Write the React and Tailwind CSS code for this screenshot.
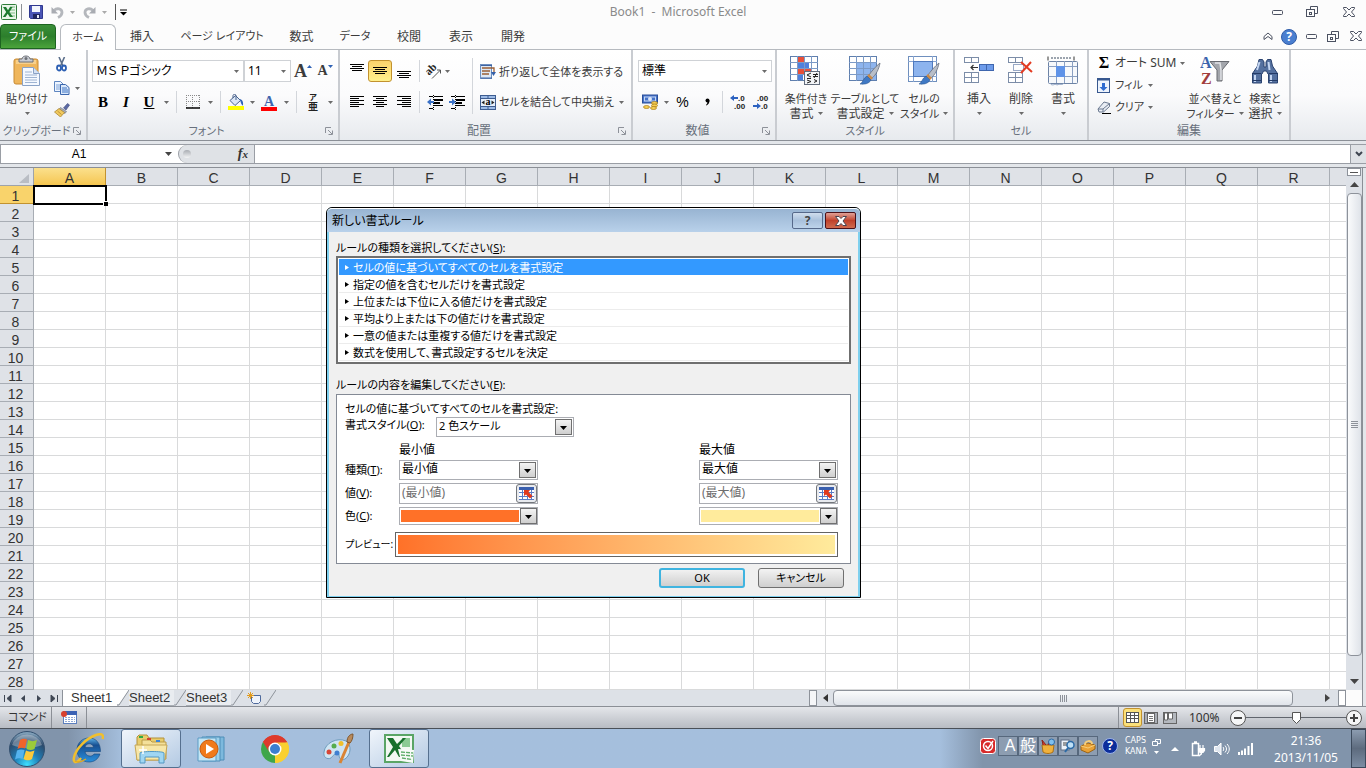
import React from "react";

/* ---------- small shared pieces ---------- */

const sizeOf = (t) => (/^[\u4e00-\u9fff]+$/.test(t) ? "text-xs" : "text-[11px]");

function Svg({ w = 16, h = 16, children, className = "" }) {
  return (
    <svg width={w} height={h} viewBox={`0 0 ${w} ${h}`} fill="none" className={"block shrink-0 " + className} aria-hidden="true">
      {children}
    </svg>
  );
}

function Caret({ className = "text-[#6b6b6b]" }) {
  return (
    <Svg w={5} h={3} className={className}>
      <path d="M0 0h5L2.5 3z" fill="currentColor" />
    </Svg>
  );
}

function Tool({ w, label, children, className = "" }) {
  return (
    <button type="button" aria-label={label} className={`flex h-[22px] shrink-0 items-center justify-center ${w} ${className}`}>
      {children}
    </button>
  );
}

function Sep({ w = "w-2" }) {
  return (
    <span className={`flex h-[22px] shrink-0 justify-center ${w}`}>
      <span className="h-full w-px bg-[#d3d6db]" />
    </span>
  );
}

function Combo({ label, value, w }) {
  return (
    <span className={`flex h-[22px] shrink-0 items-center border border-[#cfd2d6] bg-white pr-1 ${w}`}>
      <select aria-label={label} className="h-full min-w-0 flex-1 appearance-none bg-transparent pl-[3px] text-xs leading-4 text-black outline-none">
        <option>{value}</option>
      </select>
      <Caret />
    </span>
  );
}

function Group({ title, w, launcher, children }) {
  return (
    <section aria-label={title} className={`flex h-full shrink-0 flex-col border-r-2 border-r-[#c9ccd1] ${w}`}>
      <div className="flex min-h-0 flex-1">{children}</div>
      <div className="flex h-[18px] items-center text-[#68707c]">
        <span className={`flex-1 whitespace-nowrap text-center leading-4 ${sizeOf(title)}`}>{title}</span>
        {launcher && (
          <button type="button" aria-label={title + " オプション"} className="mr-[5px]">
            <Svg w={8} h={8}>
              <path d="M.5 6V.5H6M3 3l4 4M7.5 3.5v4h-4" stroke="#8d9199" />
            </Svg>
          </button>
        )}
      </div>
    </section>
  );
}

function Big({ w, icon, lines }) {
  return (
    <button type="button" className={`flex shrink-0 flex-col items-center pt-1 ${w}`}>
      <span className="mb-[3px] flex h-[34px] items-center justify-center">{icon}</span>
      <span className={`whitespace-nowrap leading-[15px] ${sizeOf(lines[0])}`}>{lines[0]}</span>
      <span className={`flex h-[15px] items-center gap-1 whitespace-nowrap leading-[15px] ${sizeOf(lines[1])}`}>
        {lines[1]}
        <Caret />
      </span>
    </button>
  );
}

/* ---------- icons ---------- */

const ExcelSmall = () => (
  <Svg w={16} h={16}>
    <rect x=".5" y=".5" width="15" height="15" rx="1" fill="#e9f5e9" stroke="#2f7d3a" />
    <path d="M9 3h5M9 6h5M9 9h5M9 12h5" stroke="#7dbb84" />
    <path d="M2 3h3l2 3.3L9 3h2.6L8.4 8l3.6 5H8.8L6.7 9.8 4.5 13H1.8L5.2 8z" fill="#1d7a2f" />
  </Svg>
);

const Floppy = () => (
  <Svg w={14} h={14}>
    <path d="M.5.5h13v13h-12l-1-1z" fill="#4a55b5" stroke="#30388f" />
    <rect x="3" y="1" width="8" height="6" fill="#f2f5fc" />
    <rect x="4" y="9" width="7" height="5" fill="#20265f" />
    <rect x="8" y="10" width="2" height="3" fill="#e6e9f5" />
  </Svg>
);

const Undo = ({ flip }) => (
  <Svg w={13} h={13} className={flip ? "-scale-x-100" : ""}>
    <path d="M3 4.500C6 1.500 11 2.500 11 6.500c0 2.500-2 4-4 5" stroke="#b4b7bc" strokeWidth="2.800" />
    <path d="M.5 1v6.500H7z" fill="#a9acb2" />
  </Svg>
);

const Paste = () => (
  <Svg w={28} h={32}>
    <rect x="1" y="4" width="24" height="25" rx="2" fill="#efb65c" stroke="#c88a33" />
    <rect x="3" y="5" width="20" height="4" fill="#f7d08c" />
    <path d="M6 7V4h3c0-4 8-4 8 0h3v3z" fill="#c9ccd2" stroke="#6d7178" />
    <circle cx="13" cy="3.500" r="1.500" fill="#6d7178" />
    <path d="M9.500 12.500h11l6 6v12h-17z" fill="#f5f9ff" stroke="#8aa2c6" />
    <path d="M20.500 12.500v6h6" fill="#d5e2f4" stroke="#8aa2c6" />
    <path d="M12 17h7M12 20h12M12 22.500h12M12 25h12M12 27.500h12" stroke="#9fb4d2" />
  </Svg>
);

const Scissors = () => (
  <Svg w={11} h={15}>
    <path d="M3 0l4 9M8.500 0L4.500 9" stroke="#5c6f8b" strokeWidth="1.600" />
    <ellipse cx="3" cy="11" rx="2" ry="2.500" stroke="#2c5fb3" strokeWidth="1.800" />
    <ellipse cx="8" cy="11" rx="2" ry="2.500" stroke="#2c5fb3" strokeWidth="1.800" />
  </Svg>
);

const Copy = () => (
  <Svg w={16} h={14}>
    <path d="M.5.5h6l3 3v7h-9z" fill="#eef5ff" stroke="#5f86c0" />
    <path d="M2 4h5M2 6h6M2 8h6" stroke="#7ea3d8" />
    <path d="M6.500 3.500h5l3.500 3v7H6.500z" fill="#dbe9fb" stroke="#3b66ad" />
    <path d="M8 7h5M8 9h6M8 11h6" stroke="#3f74c4" />
  </Svg>
);

const Brush = () => (
  <Svg w={16} h={14}>
    <path d="M9.500 5l4-4.500 2 1.500-3.500 5z" fill="#5b6aa5" stroke="#3d4677" strokeWidth=".6" />
    <path d="M6.500 4.500l6 4-1.500 2-6-4z" fill="#a9adb8" stroke="#6a6e7c" strokeWidth=".6" />
    <path d="M5 5.500l5.500 4L6.500 14 .5 9z" fill="#f0c95f" stroke="#a27b25" strokeWidth=".7" />
    <path d="M3.500 8l4 3.500" stroke="#c39634" />
  </Svg>
);

const BorderIcon = () => (
  <Svg w={14} h={14}>
    <path d="M0 .5h14M0 6.500h14M.5 0v13M6.500 0v13M13.500 0v13" stroke="#8b8b8b" strokeDasharray="1 1" />
    <path d="M0 13h14" stroke="#000" strokeWidth="1.500" />
  </Svg>
);

const Bucket = () => (
  <Svg w={16} h={16}>
    <path d="M2 6.500L7.500 1.500l5 5-5.500 5z" fill="#dbe6f6" stroke="#49628c" />
    <path d="M5 4V1.500c0-1.500 3-1.500 3 0V6" stroke="#49628c" />
    <path d="M11.500 5c3 .5 4 3 3.500 6.500-1 0-2-2-2.500-4z" fill="#2f63b8" />
    <rect y="12" width="16" height="4" fill="#ff0" />
  </Svg>
);

const FontColor = () => (
  <Svg w={16} h={18}>
    <text x="8" y="13" textAnchor="middle" fontFamily="Liberation Serif, serif" fontWeight="700" fontSize="14" fill="#3f66ae">A</text>
    <rect y="14" width="16" height="4" fill="#f00" />
  </Svg>
);

const Furigana = () => (
  <Svg w={12} h={20}>
    <text x="6" y="8" textAnchor="middle" fontFamily="Noto Sans CJK JP, sans-serif" fontSize="8" fontWeight="700" fill="#222">ア</text>
    <text x="6" y="18" textAnchor="middle" fontFamily="Noto Sans CJK JP, sans-serif" fontSize="10" fontWeight="700" fill="#222">亜</text>
  </Svg>
);

const Lines = ({ kind }) => {
  const sets = {
    left: "M0 .5h14M0 2.500h9M0 4.500h14M0 6.500h9M0 8.500h14M0 10.500h9",
    center: "M0 .5h14M3 2.500h8M0 4.500h14M3 6.500h8M0 8.500h14M3 10.500h8",
    right: "M0 .5h14M5 2.500h9M0 4.500h14M5 6.500h9M0 8.500h14M5 10.500h9",
    v: "M0 .5h14M2 2.500h10M0 4.500h14M2 6.500h10",
  };
  return (
    <Svg w={14} h={kind === "v" ? 8 : 12}>
      <path d={sets[kind]} stroke="#000" />
    </Svg>
  );
};

const Orient = () => (
  <Svg w={20} h={20}>
    <text x="4" y="14" transform="rotate(-45 6 12)" fontFamily="Liberation Serif, serif" fontWeight="700" fontSize="11" fill="#222">ab</text>
    <path d="M9 17.500L17.500 9M14 9h3.500v3.500" stroke="#555" />
  </Svg>
);

const Indent = ({ out }) => (
  <Svg w={16} h={15}>
    <path d="M2 1.500h4M7 1.500h9M7 4.500h9M7 7.500h6M7 10.500h9M2 13.500h4" stroke="#000" />
    <path d="M7 5h9M7 8h6" stroke="#000" strokeWidth="2" />
    <path d="M6.500 0v15" stroke="#000" strokeDasharray="1 1" />
    {out ? <path d="M0 7l4-3.500V6h3v2H4v2.500z" fill="#3b72c8" /> : <path d="M7 7L3 3.500V6H0v2h3v2.500z" fill="#3b72c8" />}
  </Svg>
);

const Wrap = () => (
  <Svg w={16} h={16}>
    <rect x=".5" y=".5" width="11" height="14" fill="#dde8f5" stroke="#6c8fc0" />
    <path d="M1 1.500h11M1 14h11" stroke="#3f62a0" />
    <path d="M2 4h12v5M2 7h8M2 10h7" stroke="#9b5f35" strokeWidth="1.300" />
    <path d="M11 8h5l-2.500 4z" fill="#3560a8" />
  </Svg>
);

const Merge = () => (
  <Svg w={16} h={15}>
    <rect x=".5" y=".5" width="15" height="14" fill="#9dbbe6" stroke="#3d5c90" />
    <path d="M0 3.500h16M0 11.500h16M8 0v4M8 11v4" stroke="#3d5c90" />
    <rect x="1" y="4" width="14" height="7" fill="#e8f0fb" />
    <text x="8" y="10" textAnchor="middle" fontFamily="Liberation Serif, serif" fontWeight="700" fontSize="10" fill="#000">a</text>
    <path d="M4.500 5.500v4L1.500 7.500zM11.500 5.500v4l3-2z" fill="#222" />
  </Svg>
);

const Money = () => (
  <Svg w={17} h={16}>
    <rect x=".5" y="1" width="15" height="8" fill="#4673c8" stroke="#2a4f99" />
    <rect x="2.500" y="3" width="11" height="4" stroke="#c6d8f5" />
    <circle cx="8" cy="5" r="2" fill="#dce8fb" />
    <ellipse cx="12.500" cy="9" rx="3" ry="1.500" fill="#f6ce53" stroke="#a87a14" strokeWidth=".7" />
    <ellipse cx="12.500" cy="11.500" rx="3" ry="1.500" fill="#f6ce53" stroke="#a87a14" strokeWidth=".7" />
    <ellipse cx="11.500" cy="14" rx="3" ry="1.500" fill="#f6ce53" stroke="#a87a14" strokeWidth=".7" />
    <ellipse cx="4.500" cy="13" rx="3" ry="1.500" fill="#f6ce53" stroke="#a87a14" strokeWidth=".7" />
  </Svg>
);

const Decimal = ({ more }) => (
  <Svg w={17} h={16}>
    <g fontFamily="Liberation Sans, sans-serif" fontWeight="700" fontSize="8" fill="#222">
      <text x={more ? 8 : 4} y="7">{more ? ".0" : ".00"}</text>
      <text x={more ? 4 : 8} y="15">{more ? ".00" : ".0"}</text>
    </g>
    {more ? <path d="M0 4l4-3v2h4v2H4v2z" fill="#2c62c0" /> : <path d="M8 12L4 9v2H0v2h4v2z" fill="#2c62c0" />}
  </Svg>
);

const GridBase = ({ fill }) => (
  <>
    <rect x=".5" y=".5" width="27" height="24" fill="#fff" stroke="#5f7fae" />
    {fill}
    <path d="M7.500 0v25M14.500 0v25M21.500 0v25M0 6.500h28M0 12.500h28M0 18.500h28" stroke="#7c9ac6" />
  </>
);

const CondFormat = () => (
  <Svg w={32} h={30}>
    <GridBase fill={<><path d="M7 1h7v6H7z" fill="#e8503a" /><path d="M7 7h12v6H7z" fill="#4f80dc" /><path d="M7 13h15v6H7z" fill="#e8503a" /><path d="M7 19h6v5H7z" fill="#4f80dc" /></>} />
    <rect x="14.500" y="15.500" width="15" height="13" fill="#f3f5f8" stroke="#636d7d" />
    <path d="M21 17l-4 2 4 2M17 22.500h4M23 18.500h5M23 20.500h5M27 17l-3 5M17 24l4 1.500-4 1.500M24 23.500l3 1.500-3 1.500" stroke="#222" />
  </Svg>
);

const PaintBrush = () => (
  <>
    <path d="M31 7c-4 3-9 9-11 12l3 3c4-3 7-9 8-15z" fill="#b8bec8" stroke="#68707e" strokeWidth=".8" />
    <path d="M20 18l4 4-2 2-4-4z" fill="#c98a4a" />
    <path d="M18 20l4 4c-2 4-7 4.500-11 4 3-1 3-6 7-8z" fill="#3f78c4" stroke="#2b5791" strokeWidth=".6" />
  </>
);

const TableFormat = () => (
  <Svg w={32} h={30}>
    <GridBase fill={<path d="M7 6h20v18H7z" fill="#8db4ee" />} />
    <PaintBrush />
  </Svg>
);

const CellStyle = () => (
  <Svg w={32} h={30}>
    <rect x=".5" y=".5" width="28" height="25" fill="#fff" stroke="#6f8fbe" />
    <path d="M5.500 0v26M24.500 0v26M0 5.500h29M0 20.500h29" stroke="#8aa7d2" />
    <rect x="5.500" y="5.500" width="19" height="15" fill="#8db4ee" stroke="#4f79bd" />
    <PaintBrush />
  </Svg>
);

const CellBox = ({ x, y, rows }) => (
  <>
    <rect x={x + 0.5} y={y + 0.5} width="14" height={rows * 5} fill="#fff" stroke="#7c8da8" />
    <path d={`M${x + 7.5} ${y}v${rows * 5 + 1}`} stroke="#7c8da8" />
    {rows > 1 && <path d={`M${x} ${y + 5.5}h15`} stroke="#7c8da8" />}
  </>
);

const InsertCells = () => (
  <Svg w={31} h={28}>
    <CellBox x={0} y={0} rows={1} />
    <CellBox x={0} y={15} rows={2} />
    <rect x="15.500" y="7.500" width="14" height="6" fill="#6d9bea" stroke="#3f66ae" />
    <path d="M22.500 8v6" stroke="#3f66ae" />
    <path d="M14 10.500H7M9.500 8L7 10.500 9.500 13" stroke="#333" strokeWidth="1.200" />
  </Svg>
);

const DeleteCells = () => (
  <Svg w={26} h={28}>
    <CellBox x={0} y={0} rows={1} />
    <CellBox x={0} y={15} rows={2} />
    <rect x="5.500" y="7.500" width="10" height="6" stroke="#34548f" strokeDasharray="1 1" />
    <path d="M13 5l11 10M23 5L13 16" stroke="#e33b22" strokeWidth="2" />
  </Svg>
);

const FormatCells = () => (
  <Svg w={32} h={30}>
    <path d="M1 .5v4M27 .5v4" stroke="#333" />
    <path d="M4 2h20" stroke="#3a4a5e" strokeDasharray="2 1" />
    <rect x="1.500" y="5.500" width="29" height="22" rx="1" fill="#f7f9fc" stroke="#6d83a5" />
    <path d="M9.500 5v22M17.500 5v22M25.500 5v22M1 10.500h29M1 20.500h29" stroke="#8ba0c2" />
    <rect x="9" y="10" width="9" height="11" fill="#5f93e8" />
    <path d="M3 27c2 4 5 0 7 2 3-2 5 1 7-2" stroke="#8ba0c2" />
  </Svg>
);

const FillDown = () => (
  <Svg w={13} h={15}>
    <rect x=".5" y=".5" width="12" height="14" fill="#eef4fd" stroke="#38588f" />
    <path d="M0 1.500h13" stroke="#38588f" strokeWidth="2" />
    <path d="M5 5h3v4h2.500l-4 4-4-4H5z" fill="#2f6bd0" />
  </Svg>
);

const Eraser = () => (
  <Svg w={14} h={13}>
    <path d="M1 8l6-7 5.500 1.500v3L6.500 11H2z" fill="#e9edf4" stroke="#6b7990" />
    <path d="M1 8h5l6.500-5.500M6 8v3" stroke="#6b7990" />
    <path d="M5 12.500h9" stroke="#000" />
  </Svg>
);

const SortFilter = () => (
  <Svg w={30} h={32}>
    <path d="M10 6.500h19l-7 8.500v11h-5V15z" fill="#a3a6ac" stroke="#686b71" />
    <path d="M15 8h5l1 7v10" stroke="#e2e4e7" strokeWidth="1.500" />
    <text x="0" y="13" fontFamily="Liberation Serif, serif" fontWeight="700" fontSize="16" fill="#3b64ad">A</text>
    <text x="1" y="29" fontFamily="Liberation Serif, serif" fontWeight="700" fontSize="16" fill="#a13c3c">Z</text>
  </Svg>
);

const Binoculars = () => (
  <Svg w={28} h={26}>
    <path d="M8 1.500h3.500L13 4v5h2V4l1.500-2.500H20L21.500 8l5 7.500V25h-9v-9H17l-1.500-3h-3L11 16h-.500v9h-9v-9.500L6.500 8z" fill="#54709f" stroke="#2b4370" />
    <path d="M8.500 4L6 12M4 17v7M17.500 4l1 8M20 17v7" stroke="#c3d5f2" strokeWidth="2" />
    <path d="M1 15.500h9M18 15.500h9M1 22.500h9M18 22.500h9" stroke="#233a66" />
  </Svg>
);

const MinIcon = () => (
  <Svg w={12} h={5}><rect x=".5" y=".5" width="10" height="4" rx="1" stroke="#4b5161" /></Svg>
);
const RestoreIcon = () => (
  <Svg w={13} h={12}>
    <path d="M4.500 3V.5h7v7H9" stroke="#4b5161" />
    <rect x=".5" y="3.500" width="8" height="7" stroke="#4b5161" />
    <rect x="3.500" y="6.500" width="2" height="2" stroke="#4b5161" />
  </Svg>
);
const CloseIcon = () => (
  <Svg w={12} h={11}>
    <path d="M.5.5h3L6 3l2.500-2.500h3v1L8.500 5l3 3.500v1h-3L6 7 3.500 9.500h-3v-1L3.500 5l-3-3.500z" stroke="#4b5161" />
  </Svg>
);

/* ---------- window header ---------- */

function TitleBar() {
  return (
    <header className="flex h-6 shrink-0 items-center pl-px">
      <div className="flex flex-1 items-center">
        <ExcelSmall />
        <span className="ml-1 h-4 w-px bg-[#8d9096]" />
        <button type="button" aria-label="上書き保存" className="ml-[7px]"><Floppy /></button>
        <button type="button" aria-label="元に戻す" className="ml-2 flex items-center gap-1.5"><Undo /><Caret className="text-[#aaa]" /></button>
        <button type="button" aria-label="やり直し" className="ml-2 flex items-center gap-1.5"><Undo flip /><Caret className="text-[#aaa]" /></button>
        <span className="ml-2 h-4 w-px bg-[#555]" />
        <button type="button" aria-label="クイック アクセス" className="ml-1">
          <Svg w={7} h={7}><path d="M0 1h7" stroke="#000" /><path d="M0 3h7L3.500 6.500z" fill="#000" /></Svg>
        </button>
      </div>
      <h1 className="text-xs text-[#8a8a8a]">Book1&nbsp; -&nbsp; Microsoft Excel</h1>
      <div className="flex flex-1 items-center justify-end pr-[11px]">
        <button type="button" aria-label="最小化" className="mr-[22px]"><MinIcon /></button>
        <button type="button" aria-label="元のサイズに戻す" className="mr-6"><RestoreIcon /></button>
        <button type="button" aria-label="閉じる"><CloseIcon /></button>
      </div>
    </header>
  );
}

const TABS = [
  ["挿入", "w-[52px]"],
  ["ページ レイアウト", "w-[108px]"],
  ["数式", "w-[51px]"],
  ["データ", "w-[56px]"],
  ["校閲", "w-[52px]"],
  ["表示", "w-[52px]"],
  ["開発", "w-[52px]"],
];

function RibbonTabs() {
  return (
    <nav aria-label="リボン" className="flex h-[26px] shrink-0 border-b border-[#b6babf]">
      <button type="button" className="mr-1 w-14 rounded-t border border-[#1d6420] bg-linear-to-b from-[#3a8f38] via-[#2c7f2c] to-[#4ba43b] text-white">ファイル</button>
      <button type="button" className="-mb-px w-14 rounded-t-md border border-b-0 border-[#b6babf] bg-white">ホーム</button>
      {TABS.map(([t, w]) => (
        <button key={t} type="button" className={`whitespace-nowrap ${w} ${sizeOf(t)}`}>{t}</button>
      ))}
      <div className="ml-auto flex items-center pr-1">
        <button type="button" aria-label="リボンの最小化" className="mr-2">
          <Svg w={10} h={9}><path d="M1 4.500l4-3.500 4 3.500v3L5 4.500 1 7.500z" stroke="#4b5161" /></Svg>
        </button>
        <button type="button" aria-label="ヘルプ" className="mr-[9px] flex size-4 items-center justify-center rounded-full border border-[#2f5ca8] bg-[#4a7fd0] text-xs font-bold leading-3 text-white">?</button>
        <button type="button" aria-label="ブックの最小化" className="mr-[9px]"><MinIcon /></button>
        <button type="button" aria-label="ブックを元に戻す" className="mr-2.5"><RestoreIcon /></button>
        <button type="button" aria-label="ブックを閉じる"><CloseIcon /></button>
      </div>
    </nav>
  );
}

/* ---------- ribbon ---------- */

function Ribbon() {
  return (
    <div className="flex h-[91px] shrink-0 overflow-hidden border-b border-[#8b8f96] bg-linear-to-b from-white via-[#fbfbfc] to-[#e7eaee]">
      <Group title="クリップボード" w="w-[88px]" launcher>
        <Big w="w-[54px]" icon={<Paste />} lines={["貼り付け", ""]} />
        <div className="flex flex-col pt-[3px]">
          <Tool w="w-[15px]" label="切り取り"><Scissors /></Tool>
          <Tool w="w-[26px]" label="コピー" className="mt-0.5 gap-[5px]"><Copy /><Caret /></Tool>
          <Tool w="w-4" label="書式のコピー"><Brush /></Tool>
        </div>
      </Group>

      <Group title="フォント" w="w-[252px]" launcher>
        <div className="flex flex-col gap-[9px] pl-1 pt-2.5">
          <div className="flex">
            <Combo label="フォント名" value="ＭＳ Ｐゴシック" w="w-[152px]" />
            <Combo label="フォント サイズ" value="11" w="w-[47px]" />
            <Tool w="w-6" label="フォント サイズの拡大">
              <span className="font-['Liberation_Serif',serif] text-lg font-bold leading-5">A</span>
              <Svg w={5} h={3} className="-mt-2.5"><path d="M0 3h5L2.500 0z" fill="#2f62b5" /></Svg>
            </Tool>
            <Tool w="w-5" label="フォント サイズの縮小">
              <span className="font-['Liberation_Serif',serif] text-sm font-bold leading-4">A</span>
              <Svg w={5} h={3} className="-mt-2.5"><path d="M0 0h5L2.500 3z" fill="#2f62b5" /></Svg>
            </Tool>
          </div>
          <div className="flex font-['Liberation_Serif',serif] text-[15px] font-bold text-black">
            <Tool w="w-[22px]" label="太字">B</Tool>
            <Tool w="w-6" label="斜体" className="italic">I</Tool>
            <Tool w="w-[22px]" label="下線" className="underline">U</Tool>
            <Tool w="w-3" label="下線の種類"><Caret /></Tool>
            <Sep w="w-[9px]" />
            <Tool w="w-6" label="罫線"><BorderIcon /></Tool>
            <Tool w="w-2.5" label="罫線の種類"><Caret /></Tool>
            <Sep w="w-2.5" />
            <Tool w="w-[22px]" label="塗りつぶしの色"><Bucket /></Tool>
            <Tool w="w-2.5" label="塗りつぶしの色の選択"><Caret /></Tool>
            <Tool w="w-6" label="フォントの色"><FontColor /></Tool>
            <Tool w="w-2.5" label="フォントの色の選択"><Caret /></Tool>
            <Sep w="w-2.5" />
            <Tool w="w-6" label="ふりがなの表示"><Furigana /></Tool>
            <Tool w="w-2.5" label="ふりがなの設定"><Caret /></Tool>
          </div>
        </div>
      </Group>

      <Group title="配置" w="w-[293px]" launcher>
        <div className="flex flex-col gap-[9px] pl-[5px] pt-2.5">
          <div className="flex">
            <Tool w="w-[23px]" label="上揃え" className="pb-1.5"><Lines kind="v" /></Tool>
            <Tool w="w-6" label="上下中央揃え" className="rounded-[3px] border border-[#c2922f] bg-linear-to-b from-[#fbd36c] to-[#fff08c]"><Lines kind="v" /></Tool>
            <Tool w="w-[23px]" label="下揃え" className="pt-2"><Lines kind="v" /></Tool>
            <Sep />
            <Tool w="w-5" label="方向"><Orient /></Tool>
            <Tool w="w-2" label="方向の選択"><Caret /></Tool>
          </div>
          <div className="flex">
            <Tool w="w-[23px]" label="左揃え"><Lines kind="left" /></Tool>
            <Tool w="w-6" label="中央揃え"><Lines kind="center" /></Tool>
            <Tool w="w-[23px]" label="右揃え"><Lines kind="right" /></Tool>
            <Sep />
            <Tool w="w-[23px]" label="インデントを減らす"><Indent out /></Tool>
            <Tool w="w-[22px]" label="インデントを増やす"><Indent /></Tool>
          </div>
        </div>
        <span className="ml-1 mr-[7px] mt-2 h-14 w-px bg-[#d3d6db]" />
        <div className="flex flex-col gap-2 pt-[11px]">
          <button type="button" className="flex h-[22px] items-center gap-[3px] whitespace-nowrap"><Wrap />折り返して全体を表示する</button>
          <button type="button" className="flex h-[22px] items-center gap-[3px] whitespace-nowrap"><Merge />セルを結合して中央揃え<Caret className="ml-0.5 text-[#6b6b6b]" /></button>
        </div>
      </Group>

      <Group title="数値" w="w-[144px]" launcher>
        <div className="flex flex-col gap-[9px] pl-[5px] pt-2.5">
          <Combo label="表示形式" value="標準" w="w-[134px]" />
          <div className="flex text-black">
            <Tool w="w-6" label="通貨表示形式"><Money /></Tool>
            <Tool w="w-2" label="通貨の選択"><Caret /></Tool>
            <Tool w="w-[25px]" label="パーセント スタイル" className="font-['Liberation_Sans',sans-serif] text-sm">%</Tool>
            <Tool w="w-6" label="桁区切りスタイル"><Svg w={5} h={8}><circle cx="2.500" cy="2.500" r="2" fill="#000" /><path d="M4.500 2.500c0 2-1 4-3 5L1 7c1-1 1.500-2 1.500-3z" fill="#000" /></Svg></Tool>
            <Sep w="w-[7px]" />
            <Tool w="w-[25px]" label="小数点以下の表示桁数を増やす"><Decimal more /></Tool>
            <Tool w="w-[21px]" label="小数点以下の表示桁数を減らす"><Decimal /></Tool>
          </div>
        </div>
      </Group>

      <Group title="スタイル" w="w-[178px]">
        <div className="flex pl-1">
          <Big w="w-[50px]" icon={<CondFormat />} lines={["条件付き", "書式"]} />
          <Big w="w-[68px]" icon={<TableFormat />} lines={["テーブルとして", "書式設定"]} />
          <Big w="w-[50px]" icon={<CellStyle />} lines={["セルの", "スタイル"]} />
        </div>
      </Group>

      <Group title="セル" w="w-[134px]">
        <div className="flex pl-[3px]">
          <Big w="w-[42px]" icon={<InsertCells />} lines={["挿入", ""]} />
          <Big w="w-[42px]" icon={<DeleteCells />} lines={["削除", ""]} />
          <Big w="w-[42px]" icon={<FormatCells />} lines={["書式", ""]} />
        </div>
      </Group>

      <Group title="編集" w="w-[202px]">
        <div className="flex w-[99px] flex-col pl-2 pt-0.5">
          <button type="button" className="flex h-[22px] items-center gap-1 whitespace-nowrap">
            <span className="w-3.5 font-['Liberation_Serif',serif] text-base font-bold leading-4 text-black">Σ</span><span className="text-xs">オート SUM</span><Caret />
          </button>
          <button type="button" className="flex h-[22px] items-center gap-[5px]"><FillDown />フィル<Caret /></button>
          <button type="button" className="flex h-[22px] items-center gap-1"><Eraser />クリア<Caret /></button>
        </div>
        <Big w="w-[54px]" icon={<SortFilter />} lines={["並べ替えと", "フィルター"]} />
        <Big w="w-[46px]" icon={<Binoculars />} lines={["検索と", "選択"]} />
      </Group>
    </div>
  );
}

/* ---------- formula bar ---------- */

function FormulaBar() {
  return (
    <div className="shrink-0 bg-[#e3e6ea] py-[3px] text-xs">
      <div className="flex h-5 border-y border-[#9a9ea5] bg-white">
        <div className="flex w-[178px] shrink-0 items-center border-l border-[#9a9ea5] pr-1.5">
          <input aria-label="名前ボックス" defaultValue="A1" className="min-w-0 flex-1 bg-transparent pr-2 text-center font-['Liberation_Sans',sans-serif] text-black outline-none" />
          <Svg w={7} h={4}><path d="M0 0h7L3.500 4z" fill="#444" /></Svg>
        </div>
        <div className="flex w-[77px] shrink-0 items-center justify-between rounded-l-full border-x border-[#9a9ea5] bg-[#dfe2e6] pl-1 pr-1.5">
          <span className="size-2 rounded-full bg-linear-to-b from-[#a9adb3] to-[#f4f5f6]" />
          <button type="button" aria-label="関数の挿入" className="font-['Liberation_Serif',serif] text-sm font-bold italic leading-4 text-[#333]">f<span className="text-[11px]">x</span></button>
        </div>
        <input aria-label="数式バー" className="min-w-0 flex-1 px-1 outline-none" />
        <button type="button" aria-label="数式バーの展開" className="flex w-4 shrink-0 items-center justify-center border-l border-[#9a9ea5] bg-[#dfe2e6]">
          <Svg w={8} h={6}><path d="M1 1l3 3 3-3" stroke="#3f4550" strokeWidth="2" /></Svg>
        </button>
      </div>
    </div>
  );
}

/* ---------- worksheet ---------- */

const COLS = "ABCDEFGHIJKLMNOPQR".split("");
const ROWS = Array.from({ length: 28 }, (_, i) => i + 1);

function Sheet() {
  return (
    <table className="w-full table-fixed border-separate border-spacing-0 bg-white font-['Liberation_Sans',sans-serif] text-sm leading-[14px] text-[#333]">
      <colgroup>
        <col className="w-[34px]" />
        {COLS.map((c) => <col key={c} className="w-[72px]" />)}
        <col />
      </colgroup>
      <thead>
        <tr className="h-[18px]">
          <th aria-label="すべて選択" className="border-b border-r border-[#9ea3aa] bg-[#dfe2e7] p-0">
            <Svg w={10} h={9} className="ml-auto mr-1 mt-1"><path d="M10 0v9H0z" fill="#b9bdc4" /></Svg>
          </th>
          {COLS.map((c) => (
            <th key={c} scope="col" className={"border-b border-r p-0 pt-[3px] font-normal " + (c === "A" ? "border-[#c2922f] bg-linear-to-b from-[#fbe08c] to-[#f5c64f]" : "border-[#a8adb4] bg-[#dfe2e7]")}>{c}</th>
          ))}
          <th className="border-b border-[#a8adb4] bg-[#dfe2e7] p-0" />
        </tr>
      </thead>
      <tbody>
        {ROWS.map((r) => (
          <tr key={r} className="h-[18px]">
            <th scope="row" className={"border-b border-r p-0 pr-0.5 pt-[3px] font-normal " + (r === 1 ? "border-[#c2922f] bg-[#f9d36b]" : "border-[#a8adb4] bg-[#dfe2e7]")}>{r}</th>
            {COLS.map((c) =>
              c === "A" && r === 1 ? (
                <td key={c} className="relative border-b border-r border-[#d9dadb] p-0 outline-2 outline-offset-[-1px] outline-black">
                  <span className="absolute -bottom-[3px] -right-[3px] size-[5px] border-l border-t border-white bg-black" />
                </td>
              ) : (
                <td key={c} className="border-b border-r border-[#d9dadb] p-0" />
              )
            )}
            <td className="border-b border-[#d9dadb] p-0" />
          </tr>
        ))}
      </tbody>
    </table>
  );
}

const Slash = ({ first }) => (
  <Svg w={12} h={16}>
    {first && <path d="M0 0h12L2 14H0z" fill="#fff" />}
    <path d="M12 0L2 15H0" stroke="#8d929a" />
  </Svg>
);

const TRI = {
  first: "M1.500 1v7M8 1v7L4 4.500z",
  prev: "M6 1v7L2 4.500z",
  next: "M3 1v7l4-3.500z",
  last: "M7.500 1v7M1 1v7l4-3.500z",
};

function SheetBar() {
  return (
    <div className="flex h-4 shrink-0 items-stretch bg-[#dde1e7] font-['Liberation_Sans',sans-serif] text-[13px] leading-4 text-[#333]">
      <div className="flex w-[62px] shrink-0 items-center justify-around">
        {[["first", "先頭"], ["prev", "前"], ["next", "次"], ["last", "末尾"]].map(([k, l]) => (
          <button key={k} type="button" aria-label={l + "のシート"}>
            <Svg w={9} h={9}><path d={TRI[k]} fill="#3f4754" stroke={k === "first" || k === "last" ? "#3f4754" : "none"} strokeWidth="1" /></Svg>
          </button>
        ))}
      </div>
      <button type="button" className="w-[55px] border-l border-[#8d929a] bg-white pl-2 text-left">Sheet1</button>
      <Slash first />
      <button type="button" className="w-[45px] border-b border-[#a8adb4] bg-[#e9ecf0] text-left">Sheet2</button>
      <Slash />
      <button type="button" className="w-[45px] border-b border-[#a8adb4] bg-[#e9ecf0] text-left">Sheet3</button>
      <Slash />
      <button type="button" aria-label="ワークシートの挿入" className="flex w-[21px] items-center justify-center">
        <Svg w={14} h={12}>
          <path d="M4.500 3.500h9v6l-2 2h-5l-2-2z" fill="#eef3fb" stroke="#4f6a9c" />
          <path d="M3.500 0v7M0 3.500h7M1 1l5 5M6 1L1 6" stroke="#e39b1c" />
        </Svg>
      </button>
      <Slash />
      <div className="flex-1" />
      <span className="w-2 border border-[#8d929a] bg-[#f5f6f8]" />
      <div className="flex w-[529px] min-w-0 items-center">
        <button type="button" aria-label="左へスクロール" className="flex w-4 shrink-0 justify-center"><Svg w={5} h={8}><path d="M5 0v8L0 4z" fill="#333" /></Svg></button>
        <div className="mr-8 flex h-full flex-1 items-center justify-center gap-px rounded-sm border border-[#8d929a] bg-linear-to-b from-[#fafbfc] to-[#e0e4ea]">
          {[0, 1, 2, 3].map((i) => <span key={i} className="h-[7px] w-px bg-[#8d929a]" />)}
        </div>
        <button type="button" aria-label="右へスクロール" className="mr-2 shrink-0"><Svg w={5} h={8}><path d="M0 0v8l5-4z" fill="#444" /></Svg></button>
        <span className="h-full w-2 shrink-0 border border-[#8d929a] bg-white" />
      </div>
    </div>
  );
}

function VScroll() {
  return (
    <div className="mb-4 flex w-4 shrink-0 flex-col items-center bg-[#dde1e7]">
      <span className="mx-px flex h-2 w-[14px] items-center justify-center border border-[#8d929a] bg-white"><span className="h-px w-2 bg-[#555]" /></span>
      <button type="button" aria-label="上へスクロール" className="flex h-[17px] items-center"><Svg w={9} h={5}><path d="M0 5h9L4.500 0z" fill="#444" /></Svg></button>
      <div className="flex w-[15px] flex-1 flex-col items-center justify-center gap-px rounded-sm border border-[#8d929a] bg-linear-to-r from-[#fafbfc] to-[#dfe3e9]">
        {[0, 1, 2, 3].map((i) => <span key={i} className="h-px w-[7px] bg-[#8d929a]" />)}
      </div>
      <button type="button" aria-label="下へスクロール" className="mt-[17px] flex h-[17px] items-center"><Svg w={9} h={5}><path d="M0 0h9L4.500 5z" fill="#444" /></Svg></button>
    </div>
  );
}

/* ---------- dialog ---------- */

const RULES = [
  "セルの値に基づいてすべてのセルを書式設定",
  "指定の値を含むセルだけを書式設定",
  "上位または下位に入る値だけを書式設定",
  "平均より上または下の値だけを書式設定",
  "一意の値または重複する値だけを書式設定",
  "数式を使用して、書式設定するセルを決定",
];

function DropGlyph() {
  return (
    <span className="pointer-events-none flex h-4 w-[17px] shrink-0 items-center justify-center border border-[#707070] bg-linear-to-b from-[#f4f4f4] to-[#cfcfcf] pt-0.5">
      <Svg w={7} h={4}><path d="M0 0h7L3.500 4z" fill="#000" /></Svg>
    </span>
  );
}

function DialogSelect({ id, label, value, w }) {
  return (
    <span className={`flex h-5 items-center border border-[#abadb3] bg-white pr-px ${w}`}>
      <select id={id} aria-label={label} className={`h-full min-w-0 flex-1 appearance-none bg-transparent pb-0.5 pl-0.5 leading-4 outline-none ${sizeOf(value)}`}>
        <option>{value}</option>
      </select>
      <DropGlyph />
    </span>
  );
}

function ValueField({ id, label, value }) {
  return (
    <span className="flex h-[21px] w-[139px] items-stretch border border-[#abadb3] bg-white">
      <input id={id} aria-label={label} readOnly value={value} className="min-w-0 flex-1 pb-0.5 pl-0.5 text-xs leading-4 text-[#6d6d6d] outline-none" />
      <button type="button" aria-label={label ? label + "の参照" : "最小値の参照"} className="flex w-[21px] items-center justify-center rounded-[3px] border border-[#74777c] bg-[#e8eaee]">
        <Svg w={15} h={13}>
          <rect width="15" height="13" fill="#fff" />
          <path d="M0 1.500h15" stroke="#3a5fae" strokeWidth="3" />
          <path d="M0 5.500h15M0 9.500h15M0 12.500h15M3.500 3v10M8.500 3v10M12.500 3v10" stroke="#5a7dc6" />
          <path d="M5 3h6L9.500 5l4 4-2.500 2.500-4-4L5 9z" fill="#e03a1e" />
        </Svg>
      </button>
    </span>
  );
}

function ColorField({ id, label, swatch }) {
  return (
    <button id={id} type="button" aria-label={label} aria-haspopup="listbox" className="flex h-[18px] w-[139px] items-center border border-[#abadb3] bg-white pl-px">
      <span className={`mr-px h-3 flex-1 ${swatch}`} />
      <DropGlyph />
    </button>
  );
}

function Key({ text, k }) {
  return <>{text}(<u>{k}</u>):</>;
}

function RuleDialog() {
  return (
    <div role="dialog" aria-labelledby="dlg-title" className="absolute left-[326px] top-[207px] w-[535px] rounded-t-md border border-black bg-[#7fd0ee] px-0.5 pb-px text-black">
      <div className="-mx-0.5 flex h-6 items-center rounded-t-[5px] border-t border-white bg-linear-to-b from-[#98b4d2] to-[#b9d1ea] pl-[5px] pr-1">
        <h2 id="dlg-title" className="flex-1 text-xs">新しい書式ルール</h2>
        <button type="button" aria-label="ヘルプ" className="mr-0.5 flex h-[17px] w-[31px] items-center justify-center rounded-xs border border-[#56698a] bg-linear-to-b from-[#cfdded] via-[#a9c1dc] to-[#bdd3ea] text-xs font-bold leading-3 text-[#444]">?</button>
        <button type="button" aria-label="閉じる" className="flex h-[17px] w-[31px] items-center justify-center rounded-xs border border-[#4b1018] bg-linear-to-b from-[#e0a097] via-[#c0412b] to-[#cf6a4e]">
          <Svg w={12} h={10}><path d="M.5.5h3.500L6 2.500l2-2h3.500L8 5l3.500 4.500H8l-2-2-2 2H.5L4 5z" fill="#fff" stroke="#4a4450" /></Svg>
        </button>
      </div>

      <div className="bg-[#f0f0f0] px-[7px] py-2">
        <p id="rule-type" className="h-4 leading-4"><Key text="ルールの種類を選択してください" k="S" /></p>
        <ul role="listbox" aria-labelledby="rule-type" className="border-2 border-[#6f6f6f] bg-white px-px py-px">
          {RULES.map((r, i) => (
            <li key={r} role="option" aria-selected={i === 0} className={"flex h-[17px] items-center gap-1 border-b pl-1.5 pt-px leading-[15px] " + (i === 0 ? "border-white bg-[#3399ff] text-white" : "border-[#ececec]")}>
              <Svg w={4} h={5}><path d="M0 0v5l4-2.500z" fill="currentColor" /></Svg>
              {r}
            </li>
          ))}
        </ul>

        <p className="mb-px mt-[13px] leading-4"><Key text="ルールの内容を編集してください" k="E" /></p>

        <div className="border border-[#848a95] bg-white pb-[6px] pl-2 pr-3 pt-[7px]">
          <p className="h-[15px] leading-[14px]">セルの値に基づいてすべてのセルを書式設定:</p>
          <div className="flex items-start">
            <label htmlFor="f-style" className="w-[91px] whitespace-nowrap leading-4"><Key text="書式スタイル" k="O" /></label>
            <DialogSelect id="f-style" value="2 色スケール" w="w-[138px]" />
          </div>

          <div className="mt-1.5 grid grid-cols-[54px_1fr_139px] items-center gap-y-[3px]">
            <span />
            <span className="text-xs leading-[14px]">最小値</span>
            <span className="text-xs leading-[14px]">最大値</span>

            <label htmlFor="f-type"><Key text="種類" k="T" /></label>
            <DialogSelect id="f-type" value="最小値" w="w-[139px]" />
            <DialogSelect label="最大値の種類" value="最大値" w="w-[139px]" />

            <label htmlFor="f-value"><Key text="値" k="V" /></label>
            <ValueField id="f-value" value="(最小値)" />
            <ValueField label="最大値" value="(最大値)" />

            <label htmlFor="f-color"><Key text="色" k="C" /></label>
            <ColorField id="f-color" swatch="bg-[#ff7128]" />
            <ColorField label="最大値の色" swatch="bg-[#ffeb9c]" />
          </div>

          <div className="mt-[7px] flex items-center">
            <span className="w-[50px] shrink-0 whitespace-nowrap text-[10px]">プレビュー:</span>
            <span className="flex h-[25px] flex-1 border border-[#646464] p-0.5">
              <span className="flex-1 bg-linear-to-r from-[#ff7128] to-[#ffeb9c]" />
            </span>
          </div>
        </div>

        <div className="mt-1 flex justify-end gap-[13px] pr-[7px]">
          <button type="button" className="h-5 w-[86px] rounded-[3px] border-2 border-[#3fb4e0] bg-linear-to-b from-[#f1f1f1] to-[#cfcfcf] leading-4">OK</button>
          <button type="button" className="h-5 w-[86px] rounded-[3px] border border-[#707070] bg-linear-to-b from-[#f3f3f3] to-[#cfcfcf] leading-4">キャンセル</button>
        </div>
      </div>
    </div>
  );
}

/* ---------- status bar ---------- */

function StatusBar() {
  return (
    <footer className="flex h-[23px] shrink-0 items-center border-y border-y-[#8b8f96] border-b-[#4a5058] bg-linear-to-b from-[#e4e6ea] to-[#b8bcc3] pl-2 text-[#333]">
      <span className="w-[43px] whitespace-nowrap">コマンド</span>
      <span className="h-full w-px bg-[#8b8f96]" />
      <button type="button" aria-label="マクロの記録" className="mx-[9px]">
        <Svg w={16} h={13}>
          <rect x="2.500" y=".5" width="13" height="12" fill="#fff" stroke="#5c7fbd" />
          <path d="M2 2h14" stroke="#3b62b4" strokeWidth="4" />
          <path d="M4 6.500h10M4 8.500h10M4 10.500h10" stroke="#8ea8d6" strokeDasharray="2 1" />
          <circle cx="3" cy="3" r="3" fill="#d8412f" />
        </Svg>
      </button>
      <span className="h-full w-px bg-[#8b8f96]" />
      <span className="ml-auto h-full w-px bg-[#8b8f96]" />
      <button type="button" aria-label="標準表示" className="ml-1 flex h-[19px] w-[19px] items-center justify-center rounded-[3px] border border-[#c2922f] bg-[#fbe07a]">
        <Svg w={13} h={11}><rect x=".5" y=".5" width="12" height="10" fill="#fff" stroke="#555" /><path d="M4.500 0v11M8.500 0v11M0 3.500h13M0 6.500h13" stroke="#555" /></Svg>
      </button>
      <button type="button" aria-label="ページ レイアウト表示" className="ml-0.5">
        <Svg w={14} h={12}><rect x=".5" y=".5" width="13" height="11" fill="#a9adb4" stroke="#666" /><rect x="3.500" y="1.500" width="7" height="9" fill="#fff" stroke="#666" /><path d="M5 4.500h4M5 6.500h4M5 8.500h4" stroke="#777" /></Svg>
      </button>
      <button type="button" aria-label="改ページ プレビュー" className="ml-[5px]">
        <Svg w={14} h={12}><rect x=".5" y=".5" width="13" height="11" fill="#b4b8be" stroke="#666" /><path d="M1.500 1h3v7h-3zM5.500 1h4v6h-4z" fill="#fff" stroke="#666" /></Svg>
      </button>
      <span className="ml-3 w-[33px] text-xs">100%</span>
      <button type="button" aria-label="縮小" className="ml-2">
        <Svg w={16} h={16}><circle cx="8" cy="8" r="7.500" fill="#f5f6f7" stroke="#555" /><path d="M4 8h8" stroke="#444" strokeWidth="2" /></Svg>
      </button>
      <span className="relative flex h-full w-[100px] items-center">
        <span className="h-px w-full bg-[#60656d]" />
        <input type="range" aria-label="ズーム" defaultValue="50" className="absolute inset-0 w-full opacity-0" />
        <Svg w={9} h={12} className="pointer-events-none absolute left-[46px]"><path d="M.5.5h8v7l-4 4-4-4z" fill="#fff" stroke="#555" /></Svg>
      </span>
      <button type="button" aria-label="拡大" className="mr-1">
        <Svg w={16} h={16}><circle cx="8" cy="8" r="7.500" fill="#f5f6f7" stroke="#555" /><path d="M4 8h8M8 4v8" stroke="#444" strokeWidth="2" /></Svg>
      </button>
    </footer>
  );
}

/* ---------- taskbar ---------- */

const StartOrb = () => (
  <Svg w={38} h={38}>
    <defs>
      <radialGradient id="orb" cx=".5" cy=".95" r=".9"><stop offset="0" stopColor="#3fe0ff" /><stop offset=".4" stopColor="#1f7fb8" /><stop offset=".8" stopColor="#2c4a6b" /><stop offset="1" stopColor="#7f9fb8" /></radialGradient>
    </defs>
    <circle cx="19" cy="19" r="17.500" fill="url(#orb)" stroke="#33506f" />
    <path d="M4 15a15.500 14 0 0 1 30 0c-9 4-21 4-30 0z" fill="#fff" opacity=".3" />
    <path d="M12 10c3-2 5-1.500 7-.5l-2 9c-2-1-5-1-7.500 .5z" fill="#f0642b" />
    <path d="M20 10c3 1.500 6 1.500 9 0l-2.500 9c-3 1.500-5.500 1-8 0z" fill="#9bcb3a" />
    <path d="M9 20.500c3-1.500 5.500-1 7.500-.5l-2 9c-2-1-5-1-7.500 .5z" fill="#55b3ee" />
    <path d="M18 20.500c2.500 1.500 5.500 1.500 8.500 0l-2.500 8.500c-2.500 2-6 1.500-8.500 0z" fill="#fcc93a" />
  </Svg>
);

const IE = () => (
  <Svg w={32} h={32}>
    <defs>
      <linearGradient id="ie" x1="0" y1="0" x2="0" y2="1"><stop offset="0" stopColor="#5fb4e8" /><stop offset=".3" stopColor="#174f92" /><stop offset="1" stopColor="#2a8fdc" /></linearGradient>
    </defs>
    <path d="M17 5c7 0 11.500 5 11.500 13.500H13c.5 5 7 6 9 2.500h6c-2 5.500-6 8-11 8-7 0-12-5-12-12S10 5 17 5zM13 14.500h8.500c-.5-5-8-5-8.500 0z" fill="url(#ie)" stroke="#14477e" strokeWidth=".6" fillRule="evenodd" />
    <path d="M9 25c-5 6-8 5-7-.5C4 15 15 5 24 2c6-2 8 0 6.500 4" stroke="#f0bf2e" strokeWidth="2.500" />
    <path d="M3 28c3 2 8 0 11-2" stroke="#e0a91e" strokeWidth="1.500" />
  </Svg>
);

const Explorer = () => (
  <Svg w={34} h={31}>
    <path d="M3 4l2-2h8l2 3h15v22H3z" fill="#e8cd6c" stroke="#b4923a" />
    <path d="M8 7h8l2 2h14v17H8z" fill="#f4e09a" stroke="#bb9b49" />
    <path d="M1 12h32l-2 15H3z" fill="#f7e7a8" stroke="#c6a654" />
    <rect x="5" y="3" width="4" height="2" fill="#2cab45" /><rect x="13" y="5" width="4" height="2" fill="#d44131" /><rect x="22" y="7" width="4" height="2" fill="#3a86d8" />
    <path d="M6 30V20c0-2 24-2 24 0v10h-5v-6H11v6z" fill="#9fd6f2" stroke="#5298c4" />
    <path d="M9 13v8M5 17h8" stroke="#fff" strokeWidth="1.500" />
  </Svg>
);

const Wmp = () => (
  <Svg w={30} h={28}>
    <path d="M9 2h18v23H9z" fill="#7db9dd" stroke="#4e8eb8" /><path d="M5 2h18v24H5z" fill="#9dd0ea" stroke="#4e8eb8" /><path d="M1 3h18v23H1z" fill="#c4e6f5" stroke="#5a9bc4" />
    <circle cx="12" cy="14" r="9" fill="#f07a1a" stroke="#c85a0c" /><path d="M9 9v10l8-5z" fill="#fff" />
  </Svg>
);

const Chrome = () => (
  <Svg w={30} h={30}>
    <path d="M15 15L2.900 8A14 14 0 0 1 27.100 8z" fill="#de3a2c" />
    <path d="M15 15L27.100 8A14 14 0 0 1 15 29z" fill="#f9d030" />
    <path d="M15 15v14A14 14 0 0 1 2.900 8z" fill="#3fa64a" />
    <path d="M15 8.500h12.400L27 8A14 14 0 0 0 3 8l6.300 10.300A6.500 6.500 0 0 1 15 8.500z" fill="#de3a2c" />
    <path d="M20.700 18.200L15 29A14 14 0 0 0 27.400 8.500H15a6.500 6.500 0 0 1 5.700 9.700z" fill="#f9d030" />
    <circle cx="15" cy="15" r="6.500" fill="#fff" /><circle cx="15" cy="15" r="5" fill="#3c7ed0" />
  </Svg>
);

const Palette = () => (
  <Svg w={32} h={31}>
    <path d="M2 19C3 10 15 4 24 8c6 4 5 14-1 18-4 2-6-1-6-4 0-4-5-1-8 3-4 2-8-1-7-6z" fill="#cfe5f3" stroke="#6d9cbd" />
    <circle cx="7" cy="19" r="2.500" fill="#d74636" /><circle cx="12" cy="13" r="2.500" fill="#56ad4d" /><circle cx="19" cy="10.500" r="2.500" fill="#f0c02c" /><circle cx="15" cy="20" r="2.500" fill="#3f7fd0" />
    <path d="M27 9L18 30" stroke="#d98434" strokeWidth="3" /><path d="M25 9c0-5 3-8 6-8 0 4-1 7-3 9z" fill="#b98a5b" stroke="#80582f" />
  </Svg>
);

const ExcelBig = () => (
  <Svg w={32} h={32}>
    <rect x="2" y="2" width="28" height="27" fill="#f2f8f2" stroke="#5aa566" strokeWidth="2" />
    <path d="M19 5h8v9h-8z" fill="#8ccb94" />
    <path d="M4 5h6l4 6 6-6h3l-7 8 7 11h-7l-4-7-6 7H4l6-10z" fill="#18702c" />
    <path d="M15 16l16 1-1 13-12-2z" fill="#f8fbf8" />
    <path d="M18 19l12 1M18 22l12 1M19 25l10 1.500" stroke="#5fae6b" strokeWidth="1.300" strokeDasharray="4 1" />
  </Svg>
);

function TaskButton({ label, w, active, children }) {
  return (
    <button type="button" aria-label={label} className={`flex h-full shrink-0 items-center justify-center ${w} ${active ? "rounded-[3px] border border-[#56708f] bg-linear-to-br from-[#f0f5fb] to-[#b4cae3]" : ""}`}>
      {children}
    </button>
  );
}

function ImeBox({ label, children }) {
  return (
    <button type="button" aria-label={label} className="flex size-5 items-center justify-center border border-[#57687d] bg-[#8d9db1] font-['Liberation_Sans','Noto_Sans_CJK_JP',sans-serif] text-base leading-4 text-white">
      {children}
    </button>
  );
}

function Taskbar() {
  return (
    <div className="flex h-[39px] shrink-0 items-stretch overflow-hidden bg-linear-to-r from-[#8194ab] from-5% via-[#a5bfdd] via-9% to-[#a5bfdd]">
      <TaskButton label="スタート" w="w-[54px]"><StartOrb /></TaskButton>
      <TaskButton label="Internet Explorer" w="w-[67px]"><IE /></TaskButton>
      <TaskButton label="エクスプローラー" w="w-[60px]" active><Explorer /></TaskButton>
      <TaskButton label="Windows Media Player" w="w-[62px]"><Wmp /></TaskButton>
      <TaskButton label="Google Chrome" w="w-[64px]"><Chrome /></TaskButton>
      <TaskButton label="ペイント" w="w-[62px]"><Palette /></TaskButton>
      <TaskButton label="Microsoft Excel" w="w-[60px]" active><ExcelBig /></TaskButton>
      <div className="ml-auto flex shrink-0 bg-linear-to-r from-transparent to-[#8194ab] to-10% pl-10 text-white">
        <div className="flex h-[34px] items-center">
          <Svg w={16} h={16} className="mr-0.5"><rect x=".5" y=".5" width="15" height="15" rx="3" fill="#d82a2a" stroke="#fff" /><circle cx="8" cy="8" r="4.500" stroke="#fff" strokeWidth="1.500" /><path d="M5.500 7.500l2.500 3L13 3" stroke="#fff" strokeWidth="1.500" /></Svg>
          <ImeBox label="入力モード"><span className="ml-1">A</span></ImeBox>
          <ImeBox label="変換モード">般</ImeBox>
          <ImeBox label="IME パッド">
            <Svg w={16} h={16}><path d="M2 7h12l-1 7c-3 2-7 2-10 0z" fill="#f0b13c" stroke="#a86f18" /><path d="M3 7l-1-5 4 5M8 7l1-4 2 4" fill="#d9412e" stroke="#8c2418" /><circle cx="11.500" cy="4" r="3" fill="#7fc0ee" stroke="#2c6aa6" /></Svg>
          </ImeBox>
          <ImeBox label="辞書検索">
            <Svg w={16} h={16}><rect x="1" y="2" width="8" height="10" fill="#eef2f8" stroke="#5f6e86" /><path d="M3 5h4M3 7h4" stroke="#444" /><circle cx="10.500" cy="7" r="3.500" fill="#bfe0f7" stroke="#2c6aa6" strokeWidth="1.500" /><path d="M8 10l-3 4" stroke="#2c6aa6" strokeWidth="2" /></Svg>
          </ImeBox>
          <ImeBox label="ツール">
            <Svg w={16} h={16}><path d="M1 8l7-3 7 2v4l-7 4-7-3z" fill="#e8a136" stroke="#9b6416" /><path d="M5 7c0-5 7-5 7-1" stroke="#f7cf7a" strokeWidth="2" /><path d="M1 8l7 2 7-3" stroke="#f7cf7a" /></Svg>
          </ImeBox>
          <button type="button" aria-label="IME ヘルプ" className="ml-1 flex size-4 items-center justify-center rounded-full border border-[#9db4e8] bg-[#0b2d9b] text-xs font-bold leading-3">?</button>
          <div className="ml-[7px] flex w-[22px] flex-col gap-px font-['DejaVu_Sans',sans-serif] text-[8px] leading-[10px]"><span>CAPS</span><span>KANA</span></div>
          <div className="ml-[5px] flex flex-col items-center gap-[5px]">
            <Svg w={9} h={7}><path d="M3.500 3V.5h5v4H6M.5 2.500h5v4h-5z" stroke="#fff" /></Svg>
            <Svg w={5} h={3}><path d="M0 0h5L2.500 3z" fill="#fff" /></Svg>
          </div>
        </div>
        <button type="button" aria-label="隠れているインジケーター" className="ml-2.5"><Svg w={8} h={4}><path d="M0 4h8L4 0z" fill="#fff" /></Svg></button>
        <div className="flex items-center gap-2 pl-3">
          <Svg w={15} h={16}><path d="M1.500 2.500h6v12h-6zM3 1h3" stroke="#fff" strokeWidth="1.500" /><path d="M9 4v3M12 4v3M7.500 7.500h6v2l-1.500 2h-3l-1.500-2zM10.500 11v2L8 15" fill="#fff" stroke="#fff" strokeWidth="1.200" /></Svg>
          <Svg w={16} h={14}><path d="M.5 4.500h3L7 1v12L3.500 9.500h-3z" fill="#dfe6ef" stroke="#fff" /><path d="M9 5c1 1 1 3 0 4M11 3.500c2 2 2 5 0 7M13 2c3 3 3 7 0 10" stroke="#fff" /></Svg>
          <Svg w={16} h={12}><path d="M0 9h2v3H0zM3 7.500h2V12H3zM6 5.500h2V12H6zM9.500 3h2v9h-2zM13 0h2v12h-2z" fill="#fff" /></Svg>
        </div>
        <div className="ml-[17px] flex w-[70px] flex-col items-center justify-center text-xs leading-[17px]">
          <time>21:36</time>
          <time>2013/11/05</time>
        </div>
        <button type="button" aria-label="デスクトップの表示" className="ml-2.5 w-[15px] border border-[#3c4a5c] bg-linear-to-b from-[#8c9cb0] via-[#5d6b7e] to-[#7c8da3]" />
      </div>
    </div>
  );
}

export default function App() {
  return (
    <div className="relative flex h-screen w-full flex-col overflow-hidden bg-[#fcfcfc] font-['Noto_Sans','Noto_Sans_CJK_JP',sans-serif] text-[11px] text-[#3b3b3b] [font-feature-settings:'palt']">
      <TitleBar />
      <RibbonTabs />
      <Ribbon />
      <FormulaBar />
      <main className="flex min-h-0 flex-1 border-t border-[#8b8f96]">
        <div className="flex min-w-0 flex-1 flex-col">
          <div className="min-h-0 flex-1 overflow-hidden"><Sheet /></div>
          <SheetBar />
        </div>
        <VScroll />
        <div className="w-1 shrink-0 border-l border-[#8b8f96] bg-[#e3e6ea]" />
      </main>
      <StatusBar />
      <Taskbar />
      <RuleDialog />
    </div>
  );
}
